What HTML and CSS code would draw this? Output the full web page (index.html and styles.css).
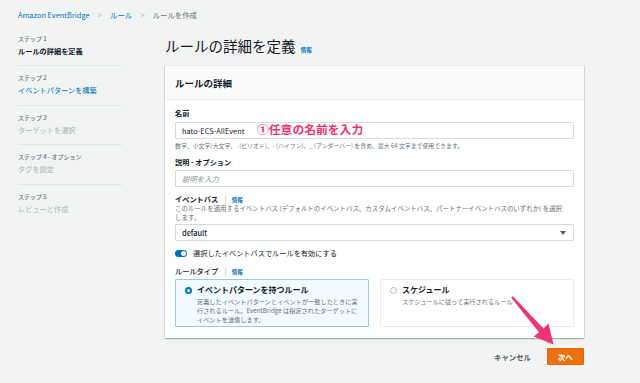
FILE: index.html
```html
<!DOCTYPE html>
<html lang="ja">
<head>
<meta charset="utf-8">
<title>ルールを作成</title>
<link rel="stylesheet" href="styles.css">
</head>
<body>
<div class="page">
  <nav class="crumbs">
    <a class="crumb-link">Amazon EventBridge</a>
    <span class="sep">&gt;</span>
    <a class="crumb-link">ルール</a>
    <span class="sep">&gt;</span>
    <span class="crumb-current">ルールを作成</span>
  </nav>
  <div class="layout">
    <aside class="steps">
      <div class="step">
        <div class="step-label">ステップ 1</div>
        <div class="step-title current">ルールの詳細を定義</div>
      </div>
      <div class="step">
        <div class="step-label">ステップ 2</div>
        <div class="step-title link">イベントパターンを構築</div>
      </div>
      <div class="step">
        <div class="step-label">ステップ 3</div>
        <div class="step-title disabled">ターゲットを選択</div>
      </div>
      <div class="step">
        <div class="step-label">ステップ 4 - オプション</div>
        <div class="step-title disabled">タグを設定</div>
      </div>
      <div class="step">
        <div class="step-label">ステップ 5</div>
        <div class="step-title disabled">レビューと作成</div>
      </div>
    </aside>
    <main class="content">
      <h1 class="page-title">ルールの詳細を定義 <span class="info">情報</span></h1>
      <section class="card">
        <header class="card-head">ルールの詳細</header>
        <div class="card-body">
          <div class="field">
            <div class="label">名前</div>
            <div class="input-wrap">
              <div class="input">hato-ECS-AllEvent</div>
              <span class="annot">①任意の名前を入力</span>
            </div>
            <div class="hint">数字、小文字/大文字、. (ピリオド)、- (ハイフン)、_ (アンダーバー) を含め、最大 64 文字まで使用できます。</div>
          </div>
          <div class="field gap-a">
            <div class="label">説明 - オプション</div>
            <div class="input placeholder">説明を入力</div>
          </div>
          <div class="field gap-b">
            <div class="label">イベントバス <span class="info bar">情報</span></div>
            <div class="desc">このルールを適用するイベントバス (デフォルトのイベントバス、カスタムイベントバス、パートナーイベントバスのいずれか) を選択します。</div>
            <div class="input select">default<span class="caret"></span></div>
          </div>
          <div class="toggle-row">
            <span class="toggle"><span class="knob"></span></span>
            <span>選択したイベントバスでルールを有効にする</span>
          </div>
          <div class="label type-label">ルールタイプ <span class="info bar">情報</span></div>
          <div class="tiles">
            <div class="tile selected">
              <span class="radio on"></span>
              <div class="tile-text">
                <div class="tile-title">イベントパターンを持つルール</div>
                <div class="tile-desc">定義したイベントパターンとイベントが一致したときに実行されるルール。EventBridge は指定されたターゲットにイベントを送信します。</div>
              </div>
            </div>
            <div class="tile">
              <span class="radio"></span>
              <div class="tile-text">
                <div class="tile-title">スケジュール</div>
                <div class="tile-desc">スケジュールに従って実行されるルール</div>
              </div>
            </div>
          </div>
        </div>
      </section>
      <div class="actions">
        <button class="btn-link">キャンセル</button>
        <button class="btn-primary">次へ</button>
      </div>
    </main>
  </div>
  <svg class="arrow" width="640" height="383" viewBox="0 0 640 383">
    <polygon fill="#f1336f" points="511.2,297.7 512.8,296.3 543.5,328.4 548.5,323.5 553.5,344.5 533.8,336.6 539.0,332.3"/>
  </svg>
</div>
</body>
</html>
```
FILE: styles.css
```css
* { box-sizing: border-box; }
html, body { margin: 0; padding: 0; }
body {
  background: #f2f3f3;
  font-family: "Noto Sans CJK JP", "Noto Sans", sans-serif;
  color: #16191f;
  width: 640px;
  height: 383px;
  overflow: hidden;
}
.page { position: relative; width: 640px; height: 383px; }

.crumbs {
  display: flex;
  align-items: center;
  gap: 8px;
  padding: 10px 18px 0;
  height: 20px;
  font-size: 7.4px;
  line-height: 10px;
}
.crumb-link { color: #0073bb; }
.crumb-current { color: #687078; }
.sep { color: #aab7b8; font-size: 8px; }

.layout {
  display: flex;
  padding: 0 56px 0 18px;
}
.steps {
  width: 104px;
  margin-right: 43px;
  padding-top: 13.5px;
}
.step {
  padding: 7px 0 9.5px;
  border-bottom: 1px solid #e2e5e5;
}
.step:first-child { padding-top: 0; }
.step:last-child { border-bottom: none; }
.step-label {
  font-size: 6px;
  line-height: 9px;
  color: #687078;
  font-weight: 500;
}
.step-title {
  margin-top: 3px;
  font-size: 7.2px;
  line-height: 10px;
}
.step-title.current { font-weight: 700; color: #16191f; }
.step-title.link { color: #0073bb; }
.step-title.disabled { color: #aab7b8; }

.content { width: 419px; padding-top: 16px; }
.page-title {
  margin: 0;
  height: 20px;
  font-size: 14.5px;
  line-height: 20px;
  font-weight: 400;
  color: #16191f;
  overflow: hidden;
}
.info {
  color: #0073bb;
  font-size: 5.5px;
  line-height: 1;
  font-weight: 700;
  vertical-align: baseline;
}
.page-title .info { margin-left: 2px; }
.info.bar {
  margin-left: 5px;
  padding-left: 6px;
  border-left: 1px solid #d5dbdb;
}

.card {
  margin-top: 9px;
  background: #fff;
  box-shadow: 0 1px 1.5px rgba(0, 28, 36, 0.3), 1px 1px 1px -1px rgba(0, 28, 36, 0.3), -1px 1px 1px -1px rgba(0, 28, 36, 0.3);
  border-top: 1px solid #eaeded;
}
.card-head {
  height: 34px;
  padding: 0 10px;
  display: flex;
  align-items: center;
  background: #fafafa;
  border-bottom: 1px solid #eaeded;
  font-size: 9.5px;
  font-weight: 700;
}
.card-body { padding: 8px 10px 11px; }

.label {
  font-size: 7.2px;
  line-height: 10px;
  font-weight: 600;
  color: #16191f;
}
.field .label { margin-bottom: 4px; }
.input-wrap { position: relative; }
.input {
  height: 17px;
  border: 1px solid #d5dbdb;
  border-radius: 1px;
  padding: 0 6px;
  display: flex;
  align-items: center;
  font-size: 7.4px;
  color: #16191f;
  background: #fff;
  position: relative;
}
.input.placeholder { color: #879596; font-style: italic; }
.annot {
  position: absolute;
  left: 82px;
  top: -1px;
  font-size: 11.8px;
  line-height: 16px;
  font-weight: 700;
  color: #f1336f;
}
.hint {
  margin-top: 1.5px;
  font-size: 5.9px;
  line-height: 9px;
  color: #687078;
}
.gap-a { margin-top: 7.5px; }
.gap-a .label { margin-bottom: 3px; }
.gap-b { margin-top: 7px; }
.gap-b .label { margin-bottom: 0; }
.desc {
  font-size: 6.45px;
  line-height: 9px;
  color: #687078;
  margin-bottom: 1.5px;
  padding-right: 8px;
}
.select { font-weight: 500; }
.caret {
  position: absolute;
  right: 7px;
  top: 6.5px;
  width: 0;
  height: 0;
  border-left: 3px solid transparent;
  border-right: 3px solid transparent;
  border-top: 4px solid #545b64;
}

.toggle-row {
  margin-top: 7.5px;
  display: flex;
  align-items: center;
  gap: 6px;
  font-size: 7.2px;
  line-height: 10px;
}
.toggle {
  width: 12px;
  height: 7px;
  border-radius: 4px;
  background: #0073bb;
  display: flex;
  justify-content: flex-end;
  align-items: center;
  padding: 1px;
}
.knob {
  width: 5px;
  height: 5px;
  border-radius: 50%;
  background: #fff;
}
.type-label { margin-top: 8px; font-weight: 500; }

.tiles {
  margin-top: 3px;
  display: grid;
  grid-template-columns: 1fr 1fr;
  gap: 11px;
}
.tile {
  height: 48px;
  border: 1px solid #eaeded;
  border-radius: 1px;
  padding: 5px 8px 0 9px;
  display: flex;
  gap: 5px;
  align-items: flex-start;
}
.tile.selected {
  background: #f1faff;
  border-color: #99cbe4;
}
.radio {
  margin-top: 1.5px;
  width: 7px;
  height: 7px;
  border-radius: 50%;
  border: 1px solid #aab7b8;
  background: #fff;
  flex: none;
}
.radio.on { border: 2px solid #0073bb; }
.tile-title {
  font-size: 8px;
  line-height: 10px;
  font-weight: 700;
  color: #16191f;
}
.tile-desc {
  margin-top: 1.5px;
  font-size: 6.2px;
  line-height: 9px;
  color: #687078;
  max-width: 166px;
}

.actions {
  margin-top: 10px;
  display: flex;
  justify-content: flex-end;
  align-items: center;
  gap: 16px;
}
.btn-link {
  border: none;
  background: none;
  padding: 0;
  font-family: inherit;
  font-size: 7.4px;
  font-weight: 700;
  color: #545b64;
}
.btn-primary {
  width: 37px;
  height: 17px;
  border: 1px solid #eb5f07;
  border-radius: 1px;
  background: #ec7211;
  color: #fff;
  font-family: inherit;
  font-size: 7.4px;
  font-weight: 700;
  padding: 0;
}
.arrow {
  position: absolute;
  left: 0;
  top: 0;
  pointer-events: none;
}
```
